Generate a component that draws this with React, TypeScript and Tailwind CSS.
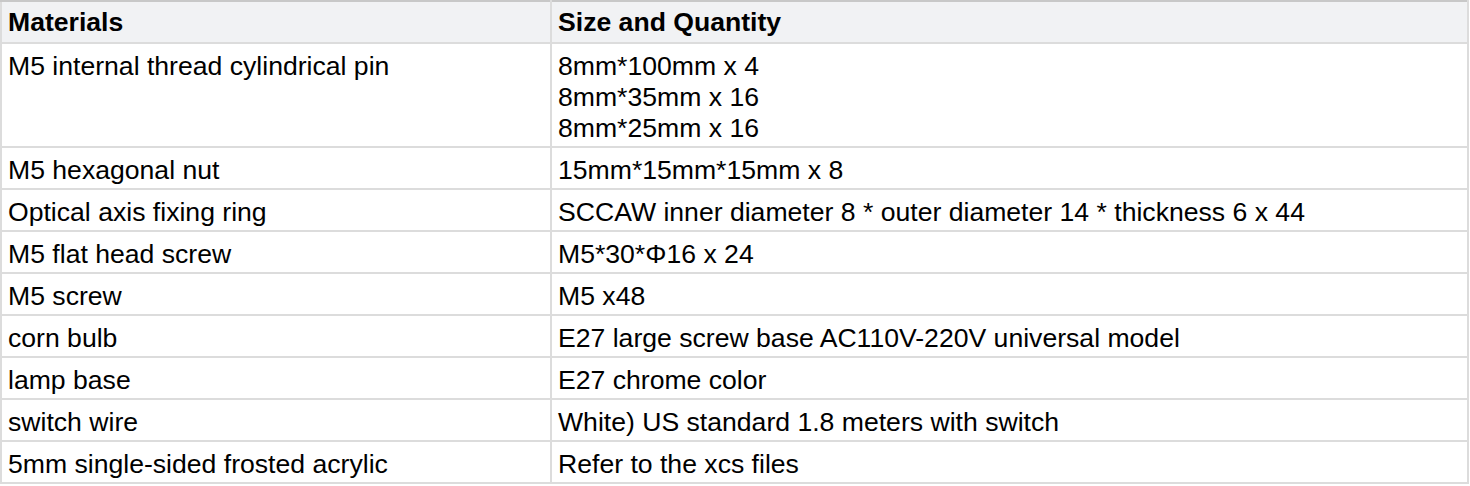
const rows: [string, string[]][] = [
  ["M5 internal thread cylindrical pin", ["8mm*100mm x 4", "8mm*35mm x 16", "8mm*25mm x 16"]],
  ["M5 hexagonal nut", ["15mm*15mm*15mm x 8"]],
  ["Optical axis fixing ring", ["SCCAW inner diameter 8 * outer diameter 14 * thickness 6 x 44"]],
  ["M5 flat head screw", ["M5*30*Φ16 x 24"]],
  ["M5 screw", ["M5 x48"]],
  ["corn bulb", ["E27 large screw base AC110V-220V universal model"]],
  ["lamp base", ["E27 chrome color"]],
  ["switch wire", ["White) US standard 1.8 meters with switch"]],
  ["5mm single-sided frosted acrylic", ["Refer to the xcs files"]],
];

export default function App() {
  return (
    <div className="w-[1470px] h-[486px] bg-white font-['Liberation_Sans',Arial,sans-serif] text-[26.6px] text-black overflow-hidden">
      <table className="w-[1469px] table-fixed border-collapse border-2 border-[#dcdcdc] border-t-[#c8c8c8]">
        <colgroup>
          <col className="w-[550px]" />
          <col />
        </colgroup>
        <thead>
          <tr className="bg-[#f1f2f4]">
            <th className="border-2 border-[#dcdcdc] border-t-[#c8c8c8] px-[6px] pt-[5px] pb-[4px] text-left font-bold leading-[31px]">Materials</th>
            <th className="border-2 border-[#dcdcdc] border-t-[#c8c8c8] px-[6px] pt-[5px] pb-[4px] text-left font-bold leading-[31px]">Size and Quantity</th>
          </tr>
        </thead>
        <tbody>
          {rows.map(([name, sizes]) => (
            <tr key={name}>
              <td className="border-2 border-[#dcdcdc] px-[6px] pt-[7px] pb-[2px] align-top leading-[31px]">{name}</td>
              <td className="border-2 border-[#dcdcdc] px-[6px] pt-[7px] pb-[2px] align-top leading-[31px]">
                {sizes.map((s) => (
                  <div key={s}>{s}</div>
                ))}
              </td>
            </tr>
          ))}
        </tbody>
      </table>
    </div>
  );
}
